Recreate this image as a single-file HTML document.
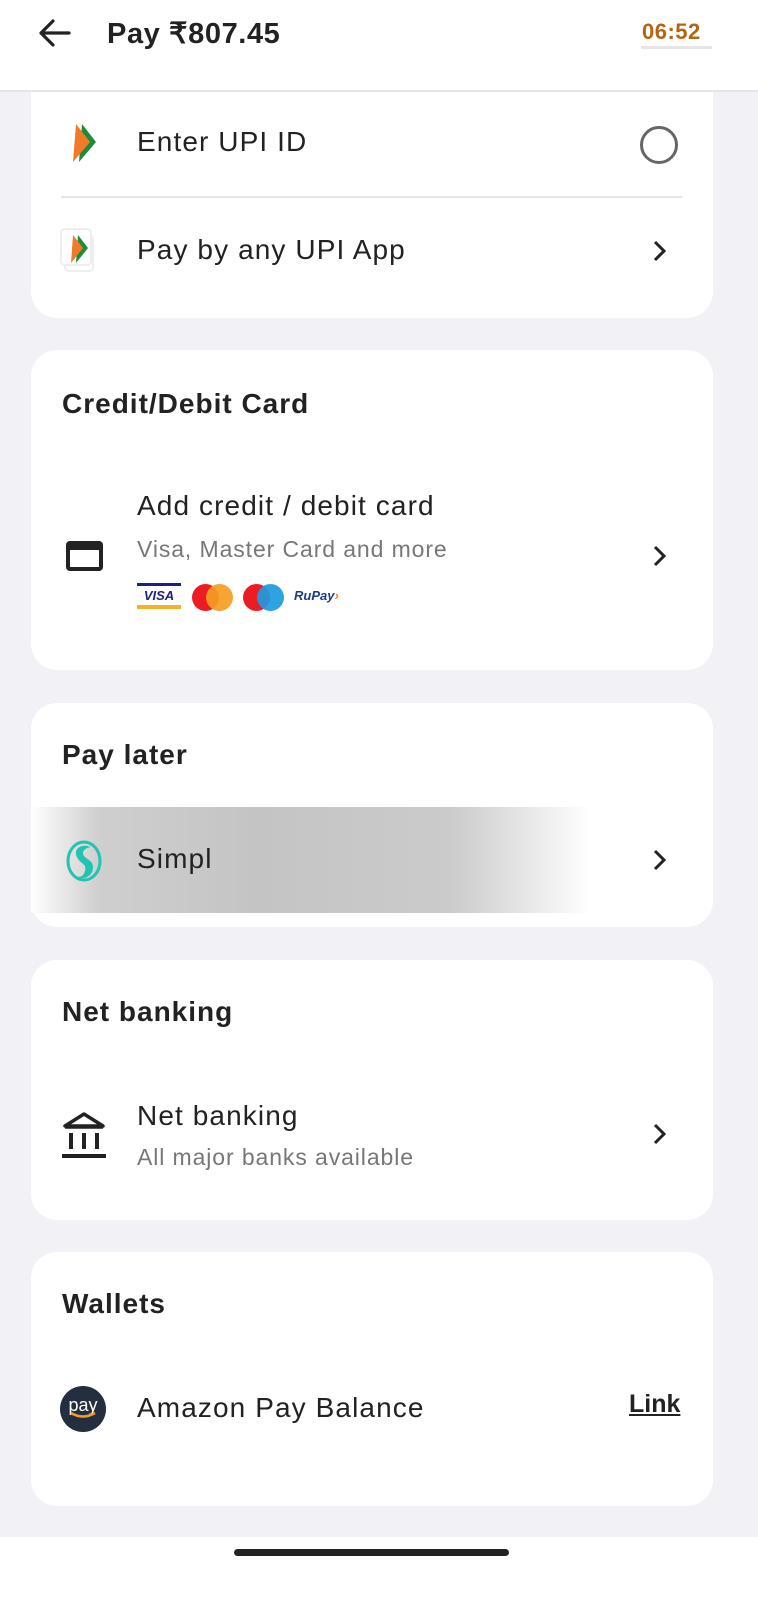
<!DOCTYPE html>
<html><head><meta charset="utf-8"><style>
*{margin:0;padding:0;box-sizing:border-box}
body{width:758px;height:1600px;background:#f1f1f6;font-family:"Liberation Sans",sans-serif;color:#1f1f1f;position:relative;overflow:hidden}
.abs{position:absolute}
.card{position:absolute;left:31px;width:682px;background:#fff;border-radius:26px}
.h{position:absolute;left:31px;font-size:28px;font-weight:bold;color:#222;letter-spacing:1px}
.t{position:absolute;left:106px;font-size:28px;color:#222;letter-spacing:1.1px}
.s{position:absolute;left:106px;font-size:23px;color:#777;letter-spacing:0.9px}
.chev{position:absolute;left:620px}
</style></head><body>
<div class="abs" style="left:0;top:0;width:758px;height:92px;background:#fff;border-bottom:2px solid #e4e4e8;z-index:5">
<svg class="abs" style="left:38px;top:18px" width="34" height="30" viewBox="0 0 34 30"><path d="M31 15H4M15 3L3 15l12 12" stroke="#222" stroke-width="3.2" fill="none" stroke-linecap="round" stroke-linejoin="round"/></svg>
<div class="abs" style="left:107px;top:16px;font-size:29px;font-weight:bold;color:#222;letter-spacing:0.6px">Pay ₹807.45</div>
<div class="abs" style="left:642px;top:19px;font-size:22px;font-weight:bold;color:#b5650f;letter-spacing:0.5px">06:52</div>
<div class="abs" style="left:641px;top:46px;width:71px;height:3px;background:#e6e6e6"></div>
</div>
<div class="card" style="top:40px;height:278px">
<svg class="abs" style="left:37px;top:82px" width="32" height="42" viewBox="0 0 32 42"><path d="M14 2l14 18-17 20z" fill="#1e8a3c"/><path d="M8 2l14 18-17 20z" fill="#f07a2a"/></svg>
<div class="t" style="top:86px">Enter UPI ID</div>
<div class="abs" style="left:609px;top:86px;width:38px;height:38px;border:3px solid #666;border-radius:50%"></div>
<div class="abs" style="left:30px;top:156px;width:621px;height:2px;background:#e6e6e6"></div>
<div class="abs" style="left:33px;top:194px;width:30px;height:38px;border:2px solid #eee;border-radius:5px"></div>
<div class="abs" style="left:29px;top:188px;width:32px;height:38px;border:2px solid #eee;border-radius:5px;background:#fff"></div>
<svg class="abs" style="left:36px;top:194px" width="24" height="30" viewBox="0 0 24 30"><path d="M11 1l10 13-12 15z" fill="#1e8a3c"/><path d="M6 1l10 13-12 15z" fill="#f07a2a"/></svg>
<div class="t" style="top:194px">Pay by any UPI App</div>
<svg class="chev" style="top:199px" width="16" height="24" viewBox="0 0 16 24"><path d="M4 3l9 9-9 9" stroke="#222" stroke-width="3" fill="none"/></svg>
</div>
<div class="card" style="top:350px;height:320px">
<div class="h" style="top:38px">Credit/Debit Card</div>
<div class="t" style="top:140px">Add credit / debit card</div>
<div class="s" style="top:186px">Visa, Master Card and more</div>
<div class="abs" style="left:35px;top:191px;width:37px;height:30px;border:4px solid #222;border-radius:4px;border-top-width:9px"></div>
<div class="abs" style="left:106px;top:233px;width:44px;height:28px">
<div style="height:3px;background:#1a237e"></div><div style="font:italic bold 13px 'Liberation Sans';color:#1a237e;text-align:center;line-height:19px">VISA</div><div style="height:4px;background:#f2b32c"></div></div>
<div class="abs" style="left:161px;top:234px;width:27px;height:27px;border-radius:50%;background:#eb1c24"></div>
<div class="abs" style="left:175px;top:234px;width:27px;height:27px;border-radius:50%;background:#f59d22;opacity:.92"></div>
<div class="abs" style="left:212px;top:234px;width:27px;height:27px;border-radius:50%;background:#eb1c24"></div>
<div class="abs" style="left:226px;top:234px;width:27px;height:27px;border-radius:50%;background:#1d9ae0;opacity:.92"></div>
<div class="abs" style="left:263px;top:238px;font:italic bold 13px 'Liberation Sans';color:#1a3d8f">RuPay<span style="color:#f07a2a">›</span></div>
<svg class="chev" style="top:194px" width="16" height="24" viewBox="0 0 16 24"><path d="M4 3l9 9-9 9" stroke="#222" stroke-width="3" fill="none"/></svg>
</div>
<div class="card" style="top:703px;height:224px">
<div class="h" style="top:36px">Pay later</div>
<div class="abs" style="left:0;top:104px;width:560px;height:106px;background:linear-gradient(90deg,#fff 0%,#cfcfcf 12%,#c4c4c4 40%,#cbcbcb 75%,#fff 100%)"></div>
<svg class="abs" style="left:34px;top:136px" width="38" height="44" viewBox="0 0 38 44"><ellipse cx="19" cy="22" rx="16" ry="19" fill="none" stroke="#21c4b2" stroke-width="3"/><path d="M26 8c-10-4-18 2-14 10s10 6 8 14-8 6-12 4c6 6 20 4 20-8 0-8-10-8-10-14 0-4 6-6 8-6z" fill="#21c4b2"/></svg>
<div class="t" style="top:140px">Simpl</div>
<svg class="chev" style="top:145px" width="16" height="24" viewBox="0 0 16 24"><path d="M4 3l9 9-9 9" stroke="#222" stroke-width="3" fill="none"/></svg>
</div>
<div class="card" style="top:960px;height:260px">
<div class="h" style="top:36px">Net banking</div>
<div class="t" style="top:140px">Net banking</div>
<div class="s" style="top:184px">All major banks available</div>
<svg class="abs" style="left:30px;top:151px" width="46" height="50" viewBox="0 0 46 50"><path d="M23 3L4 15h38z" fill="none" stroke="#222" stroke-width="3.5" stroke-linejoin="round"/><path d="M4 16h38" stroke="#222" stroke-width="3.5"/><path d="M10 22v16M23 22v16M36 22v16" stroke="#222" stroke-width="4"/><path d="M1 45h44" stroke="#222" stroke-width="4"/></svg>
<svg class="chev" style="top:162px" width="16" height="24" viewBox="0 0 16 24"><path d="M4 3l9 9-9 9" stroke="#222" stroke-width="3" fill="none"/></svg>
</div>
<div class="card" style="top:1252px;height:254px">
<div class="h" style="top:36px">Wallets</div>
<div class="abs" style="left:29px;top:134px;width:46px;height:46px;border-radius:50%;background:#232f3e;color:#fff;font-size:18px;text-align:center;line-height:38px">pay</div>
<svg class="abs" style="left:38px;top:158px" width="28" height="10" viewBox="0 0 28 10"><path d="M2 3q12 7 24 0" stroke="#f59d22" stroke-width="2.5" fill="none"/></svg>
<div class="t" style="top:140px">Amazon Pay Balance</div>
<div class="abs" style="left:598px;top:138px;font-size:25px;font-weight:bold;color:#222;text-decoration:underline">Link</div>
</div>
<div class="abs" style="left:0;top:1537px;width:758px;height:63px;background:#fff"></div>
<div class="abs" style="left:234px;top:1549px;width:275px;height:7px;border-radius:4px;background:#222"></div>
</body></html>
